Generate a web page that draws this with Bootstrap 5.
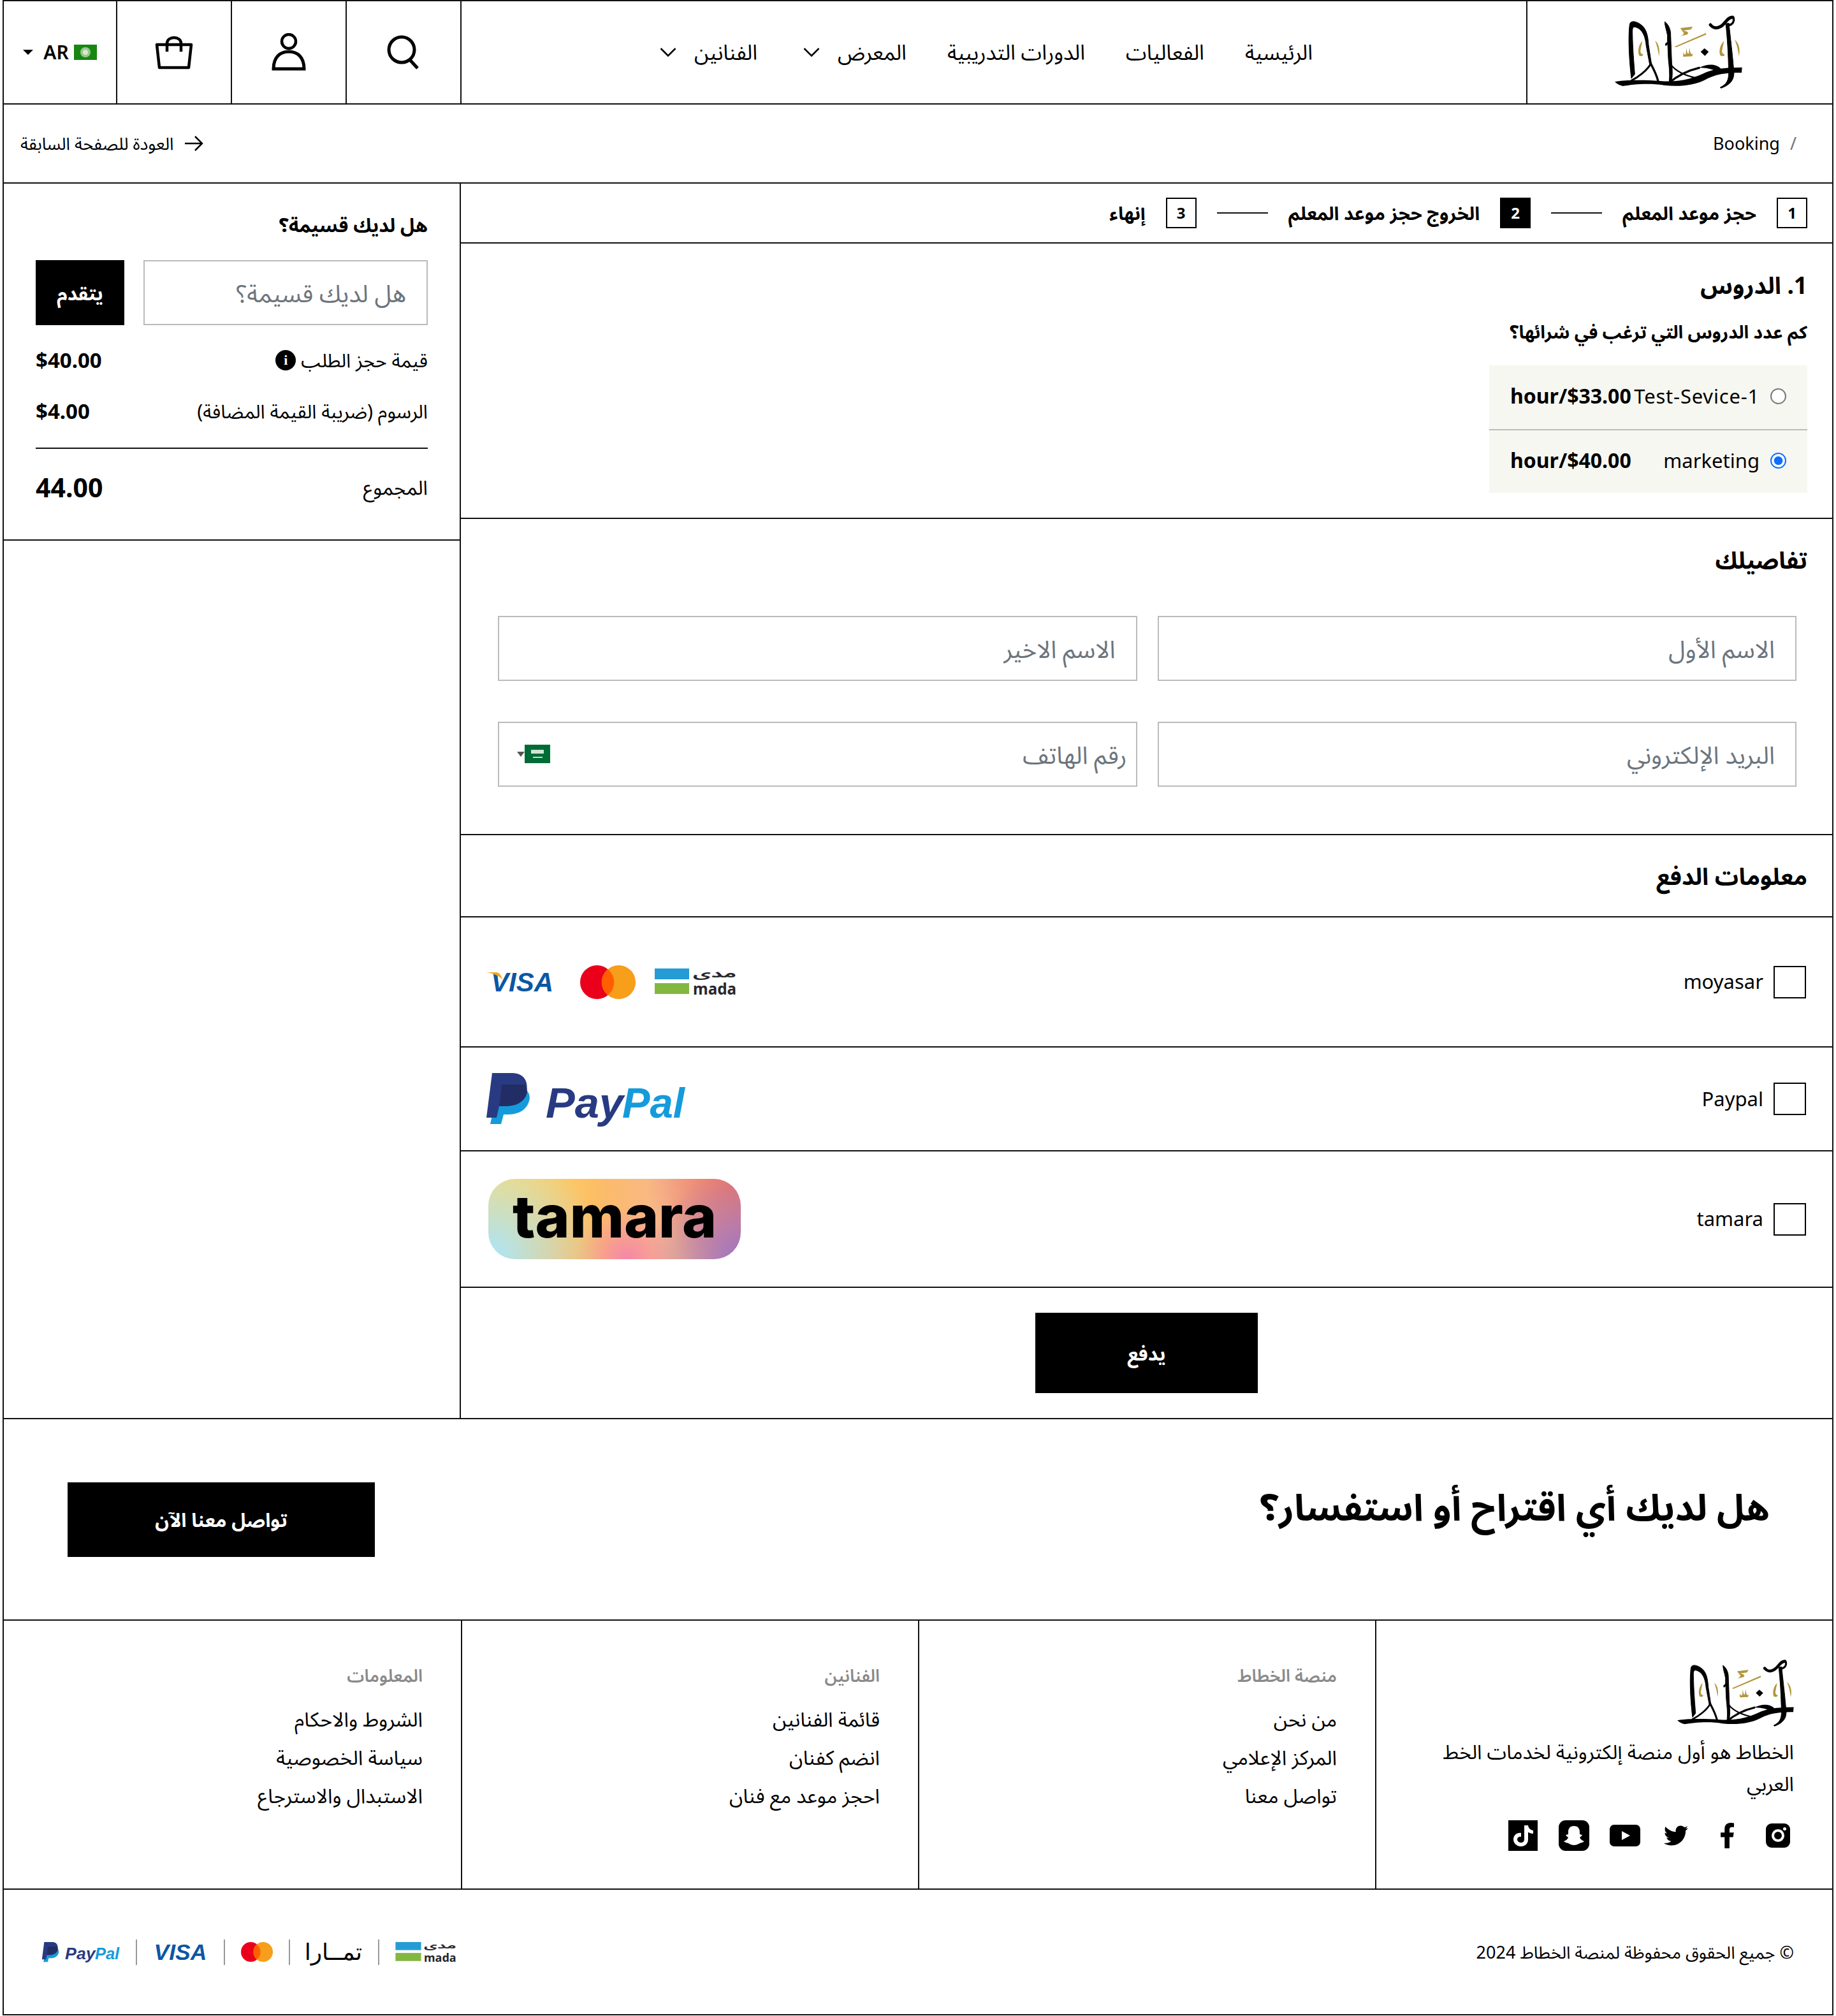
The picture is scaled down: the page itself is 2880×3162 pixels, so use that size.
<!DOCTYPE html>
<html lang="ar" dir="rtl">
<head>
<meta charset="utf-8">
<title>Booking</title>
<link rel="stylesheet" href="https://cdn.jsdelivr.net/npm/bootstrap@5.3.0/dist/css/bootstrap.min.css">
<style>
:root{--ink:#111;--field:#bbb}
html,body{background:#fff}
body{font-family:"Noto Sans","Noto Sans Arabic","DejaVu Sans",sans-serif;color:#000;font-size:30px;line-height:1.4}
a{color:#000;text-decoration:none}
.frame{margin-left:4px;margin-right:4px;border:2px solid var(--ink)}
.logo-art{overflow:visible}
.top-bar{height:162px;border-bottom:2px solid var(--ink)}
.logo-cell{width:480px;border-left:2px solid var(--ink)}
.logo-hd{width:200px;height:116px;margin-top:-2px;margin-right:4px}
.menu-area{font-size:33px;gap:64px;padding-right:24px}
.menu-item{gap:28px}
.menu-item + .menu-item{margin-right:8px}
.tool-cell{width:180px;border-right:2px solid var(--ink)}
.lang-cell{width:178px;border-right:2px solid var(--ink);gap:8px;font-size:30px;font-weight:600}
.mini-caret{width:0;height:0;border-left:8px solid transparent;border-right:8px solid transparent;border-top:8px solid #000;margin-right:8px}
.crumb-bar{height:124px;border-bottom:2px solid var(--ink);padding:0 56px 0 26px;font-size:27px}
.crumb-sep{color:#6c757d}
.side-col{border-right:2px solid var(--ink)}
.side-box{height:560px;border-bottom:2px solid var(--ink);padding:0 50px}
.side-title{font-size:30px;font-weight:700;height:120px;padding-top:44px}
.coupon{gap:30px}
.ctl{height:102px;border:2px solid var(--field);border-radius:0;font-size:38px;padding:0 32px;background:#fff}
.ctl::placeholder{color:#6c757d}
.coupon .ctl{width:446px;flex:none}
.btn-dark-box{background:#000;color:#fff;border:0;border-radius:0;font-weight:700}
.coupon .btn-dark-box{width:140px;height:102px;font-size:30px;padding:0}
.sum-line{font-size:30px;height:80px}
.sum-line b{font-weight:700;font-size:33px}
.sum-first{margin-top:15px}
.sum-total{margin-top:17px;border-top:2px solid var(--ink);padding-top:32px;font-size:31px}
.sum-total b{font-size:41px;font-weight:700}
.info-dot{width:32px;height:32px;border-radius:50%;background:#000;color:#fff;font:700 22px/32px "Liberation Serif",serif;text-align:center;flex:none}
.steps{height:94px;border-bottom:2px solid var(--ink);padding:0 39px;gap:32px;font-size:29px;font-weight:700}
.step-num{width:48px;height:48px;border:2px solid #000;font-size:24px;line-height:44px;text-align:center;flex:none}
.step-on{background:#000;color:#fff}
.step-rule{width:80px;height:2px;background:#111;flex:none}
.sec{border-bottom:2px solid var(--ink)}
.sec-lessons{height:432px;padding:43px 39px 0}
.sec-title{font-size:37px;font-weight:700;line-height:44px;margin:0}
.sec-q{font-size:28px;font-weight:700;line-height:44px;margin:29px 0 31px}
.lesson-box{width:499px;background:#f7f7f1}
.lesson-row{height:100px;padding:0 33px 3px;font-size:31px}
.lesson-row + .lesson-row{border-top:2px solid var(--field)}
.lesson-row b{margin-right:auto;font-weight:700;font-size:32px;white-space:nowrap}
.svc-wide{letter-spacing:.8px;white-space:nowrap}
.lesson-box .form-check-input{width:25px;height:25px;margin:0 0 0 17px;flex:none;border:2px solid #777}
.lesson-box .form-check-input:checked{border-color:#0d6efd;background-color:#fff;background-image:url("data:image/svg+xml,%3csvg xmlns='http://www.w3.org/2000/svg' viewBox='-4 -4 8 8'%3e%3ccircle r='2.6' fill='%230d6efd'/%3e%3c/svg%3e")}
.sec-details{height:496px;padding:0 56px 0 58px}
.sec-details .sec-title{padding:42px 0 0;margin-right:-17px;margin-bottom:65px;height:87px}
.fields{--bs-gutter-x:32px;--bs-gutter-y:64px}
.phone-wrap .ctl{padding-right:14px}
.phone-flag{position:absolute;left:30px;top:36px;display:flex;align-items:center}
.phone-caret{width:0;height:0;border-left:6px solid transparent;border-right:6px solid transparent;border-top:8px solid #555}
.sec-pay-head{height:129px;padding:0 39px}
.pay-row{padding:0 41px 0 40px;font-size:31px}
.pay-label{gap:16px}
.pay-label .form-check-input{width:51px;height:51px;margin:0;border:2px solid #000;border-radius:0;flex:none}
.h-moy{height:204px}.h-pp{height:163px}.h-tam{height:214px}
.moy-logos{gap:30px}
.mc-gap{margin-left:12px}
.tam-badge{width:396px;height:126px;margin-left:3px;border-radius:42px;font:800 92px/118px Inter,"Noto Sans",sans-serif;text-align:center;color:#000;direction:ltr;
background:
 radial-gradient(circle at 100% 100%,#9c74c4 0,rgba(156,116,196,0) 34%),
 radial-gradient(circle at 100% 0,#e9736a 0,rgba(233,115,106,0) 36%),
 radial-gradient(circle at 0 100%,#a9e6ff 0,rgba(169,230,255,0) 44%),
 radial-gradient(circle at 55% 100%,#f587a8 0,rgba(245,135,168,0) 32%),
 radial-gradient(circle at 0 0,#fddc70 0,rgba(253,220,112,0) 45%),
 linear-gradient(90deg,#fdc860,#fdbb62 40%,#f7b98c 70%,#f09a80)}
.pay-submit{height:204px;padding-top:39px}
.pay-submit .btn-dark-box{width:349px;height:126px;font-size:30px}
.contact{height:318px;border-top:2px solid var(--ink);border-bottom:2px solid var(--ink);padding:0 98px 0 100px}
.contact h2{font-size:58px;font-weight:700;margin:-40px 0 0;line-height:1.3}
.contact .btn-dark-box{width:482px;height:117px;font-size:30px;padding:0}
.foot-col{height:420px;border-left:2px solid var(--ink);padding:64px 60px 0}
.foot-col.endcol{border-left:0}
.foot-col h6{color:#8a8a8a;font-size:27px;font-weight:600;line-height:44px;margin:0 0 16px}
.foot-col a{display:block;font-size:31.500px;line-height:60px}
.foot-col.brand-col{padding:60px 60px 0 90px}
.logo-ft{width:183px;height:106px;display:block;margin-bottom:14px}
.brand-col p{font-size:31px;line-height:50px;margin:0 0 32px}
.socials{margin-right:-15px}
.socials span{width:80px;display:flex;justify-content:center;align-items:center;height:50px}
.base-bar{height:197px;border-top:2px solid var(--ink);padding:0 60px 0 59px;font-size:27px}
.paylogos{gap:25px}
.paylogos i{width:2px;height:40px;background:#999;flex:none}
.tam-arabic{font:400 36px/40px "DejaVu Sans",sans-serif;width:88px;text-align:center;white-space:nowrap}
</style>
</head>
<body>
<svg width="0" height="0" class="position-absolute">
 <symbol id="khatt" viewBox="168 72 600 348">
  <g stroke="#000" stroke-width="3">
  <path d="M246 372C236 290 230 180 238 118C242 100 262 101 285 115C315 133 324 165 327 215L340 300L332 306L316 220C312 170 296 142 270 132C254 126 250 132 251 160C252 230 258 300 262 352Z"/>
  <path d="M403 105C420 118 432 140 431 170L436 300C440 340 440 370 432 395L424 388C428 350 424 320 420 280L417 210L408 218L406 210L416 200L416 170C412 145 403 125 403 105Z"/>
  <path d="M690 115L705 112C712 180 722 260 728 335C732 375 716 400 668 418L664 414C695 400 705 380 704 340C702 260 698 180 690 115Z"/>
  </g>
  <g fill="none" stroke="#000" stroke-linecap="round">
   <path stroke-width="9" d="M338 302C320 335 278 366 246 382"/>
   <path stroke-width="10" d="M336 300C352 330 366 360 372 385"/>
   <path stroke-width="15" d="M722 84C696 84 690 115 665 128C645 140 628 132 618 120"/>
   <path stroke-width="10" d="M726 85C732 105 722 120 700 122"/>
   <path stroke-width="7" d="M430 305C455 340 500 360 560 372"/>
   <path stroke-width="10" d="M565 322C510 335 460 360 420 396"/>
  </g>
  <path d="M168 388C205 380 300 378 380 384C470 392 540 372 600 342C650 322 700 322 767 320L765 345C690 345 640 352 590 380C540 405 470 412 400 404C330 392 250 400 205 408C190 404 175 396 168 388Z"/>
  <path d="M565 322C600 304 640 300 668 326L640 336C620 326 590 322 565 322Z"/>
  <path d="M590 230L610 247L592 266L572 247Z"/>
  <g fill="#b3963f">
   <path d="M476 135L535 128L526 142L490 147C510 150 518 155 510 165L476 174C490 168 498 158 488 152Z"/>
   <path d="M450 222L597 158L598 166L456 226Z"/>
   <path d="M489 240C489 254 494 262 502 258L505 228C508 254 512 258 516 254L520 226C522 256 528 262 536 256L532 268L490 270Z"/>
   <path d="M298 196C282 210 274 240 282 264C292 270 300 266 302 260C292 256 286 250 290 235Z"/>
   <path d="M358 196C372 204 382 230 376 268C372 240 366 214 358 196Z"/>
   <path d="M682 196C666 210 656 240 664 264C674 270 684 266 686 260C676 256 670 250 674 235Z"/>
   <path d="M732 190C752 205 760 236 752 268C748 236 742 212 732 190Z"/>
  </g>
 </symbol>
 <symbol id="mc" viewBox="0 0 87 53" preserveAspectRatio="none">
  <circle cx="26.500" cy="26.500" r="26.500" fill="#eb001b"/>
  <circle cx="60.500" cy="26.500" r="26.500" fill="#f79e1b"/>
  <path d="M43.500 6.300C37.500 11 33.700 18.300 33.700 26.500S37.500 42 43.500 46.700C49.500 42 53.300 34.700 53.300 26.500S49.500 11 43.500 6.300Z" fill="#ff5f00"/>
 </symbol>
 <symbol id="pmark" viewBox="0 0 70 82">
  <path d="M19 22H48C66 22 70 36 67 44C62 60 48 65 33 65H27L23 80H6Z" fill="#159bdb"/>
  <path d="M9 0H41C59 0 66 14 63 28C58 47 44 52 28 52H20L16 70H0Z" fill="#283b82"/>
  <path d="M24 18H60C65 24 65 30 61 38C54 49 42 52 28 52H20Z" fill="#222d65"/>
 </symbol>
</svg>

<div class="frame">
 <header class="top-bar d-flex">
  <a href="#" class="logo-cell d-flex align-items-center justify-content-center"><svg class="logo-hd"><use href="#khatt"/></svg></a>
  <nav class="menu-area flex-grow-1 d-flex align-items-center justify-content-center">
   <a href="#">الرئيسية</a><a href="#">الفعاليات</a><a href="#">الدورات التدريبية</a>
   <a href="#" class="menu-item d-flex align-items-center"><span>المعرض</span><svg width="26" height="16" viewBox="0 0 26 16"><path d="M1.500 2L13 13.500L24.500 2" fill="none" stroke="#000" stroke-width="2.500"/></svg></a>
   <a href="#" class="menu-item d-flex align-items-center"><span>الفنانين</span><svg width="26" height="16" viewBox="0 0 26 16"><path d="M1.500 2L13 13.500L24.500 2" fill="none" stroke="#000" stroke-width="2.500"/></svg></a>
  </nav>
  <a href="#" class="tool-cell d-flex align-items-center justify-content-center"><svg width="52" height="54" viewBox="0 0 52 54"><circle cx="23" cy="23" r="20" fill="none" stroke="#000" stroke-width="5"/><path d="M36 39L48 52" stroke="#000" stroke-width="5"/></svg></a>
  <a href="#" class="tool-cell d-flex align-items-center justify-content-center"><svg width="54" height="60" viewBox="0 0 54 60"><circle cx="27" cy="13" r="11" fill="none" stroke="#000" stroke-width="4.500"/><path d="M3 56C3 38 13 29 27 29S51 38 51 56Z" fill="none" stroke="#000" stroke-width="5"/></svg></a>
  <a href="#" class="tool-cell d-flex align-items-center justify-content-center"><svg width="60" height="54" viewBox="0 0 60 54"><path d="M3 15H57L53 51H7Z" fill="none" stroke="#000" stroke-width="4.500" stroke-linejoin="round"/><path d="M19 26V13C19 1 41 1 41 13V26" fill="none" stroke="#000" stroke-width="4.500"/></svg></a>
  <a href="#" class="lang-cell d-flex align-items-center justify-content-center">
   <svg width="36" height="24" viewBox="0 0 36 24"><rect width="36" height="24" fill="#17870f"/><circle cx="18" cy="12" r="8" fill="#9cc592"/><circle cx="18" cy="12" r="4" fill="#d9e8d2"/></svg>
   <span dir="ltr">AR</span><span class="mini-caret"></span>
  </a>
 </header>

 <div class="crumb-bar d-flex align-items-center justify-content-between">
  <ol class="list-unstyled d-flex gap-3 m-0 p-0"><li class="crumb-sep">/</li><li dir="ltr">Booking</li></ol>
  <a href="#" class="d-flex align-items-center gap-3"><svg width="30" height="26" viewBox="0 0 30 26"><path d="M1 13H28M17 2L28 13L17 24" fill="none" stroke="#000" stroke-width="2.500"/></svg><span>العودة للصفحة السابقة</span></a>
 </div>

 <div class="row g-0">
  <main class="col-9">
   <div class="steps d-flex align-items-center">
    <span class="step-num">1</span><span>حجز موعد المعلم</span><span class="step-rule"></span>
    <span class="step-num step-on">2</span><span>الخروج حجز موعد المعلم</span><span class="step-rule"></span>
    <span class="step-num">3</span><span>إنهاء</span>
   </div>

   <section class="sec sec-lessons">
    <h2 class="sec-title">1. الدروس</h2>
    <p class="sec-q">كم عدد الدروس التي ترغب في شرائها؟</p>
    <div class="lesson-box">
     <label class="lesson-row d-flex align-items-center"><input class="form-check-input" type="radio" name="lesson"><span dir="ltr" class="svc-wide">Test-Sevice-1</span><b dir="ltr">hour/$33.00</b></label>
     <label class="lesson-row d-flex align-items-center"><input class="form-check-input" type="radio" name="lesson" checked><span dir="ltr">marketing</span><b dir="ltr">hour/$40.00</b></label>
    </div>
   </section>

   <section class="sec sec-details">
    <h2 class="sec-title">تفاصيلك</h2>
    <div class="row fields">
     <div class="col-6"><input class="form-control ctl" placeholder="الاسم الأول"></div>
     <div class="col-6"><input class="form-control ctl" placeholder="الاسم الاخير"></div>
     <div class="col-6"><input class="form-control ctl" placeholder="البريد الإلكتروني"></div>
     <div class="col-6"><div class="phone-wrap position-relative"><input class="form-control ctl" placeholder="رقم الهاتف">
      <span class="phone-flag" dir="ltr"><span class="phone-caret"></span><svg width="40" height="29" viewBox="0 0 40 29"><rect width="40" height="29" fill="#006c35"/><rect x="10" y="8" width="20" height="6" fill="#cfe4d6"/><rect x="13" y="19" width="15" height="1.500" fill="#fff"/></svg></span></div></div>
    </div>
   </section>

   <section class="sec sec-pay-head d-flex align-items-center"><h2 class="sec-title">معلومات الدفع</h2></section>

   <div class="sec pay-row h-moy d-flex align-items-center justify-content-between">
    <label class="pay-label d-flex align-items-center"><input class="form-check-input" type="checkbox"><span dir="ltr">moyasar</span></label>
    <div class="moy-logos d-flex align-items-center" dir="ltr">
     <svg class="logo-art" width="105" height="34" viewBox="0 0 105 34"><text x="7" y="32" font-family="Liberation Sans" font-weight="700" font-style="italic" font-size="43" fill="#0b57a4" textLength="98" lengthAdjust="spacingAndGlyphs" direction="ltr">VISA</text><path d="M0 2H15C20 2 23 6 25 13C20 8 12 4 0 2Z" fill="#f5a51e"/></svg>
     <svg class="mc-gap" width="87" height="53"><use href="#mc" width="87" height="53"/></svg>
     <svg class="logo-art" width="128" height="43" viewBox="0 0 128 43"><rect width="54" height="17" fill="#259bd6"/><rect y="23" width="54" height="17" fill="#84b740"/><text x="128" y="14" text-anchor="start" direction="rtl" font-family="Noto Sans Arabic,Noto Sans,DejaVu Sans" font-weight="700" font-size="17" fill="#27272b" textLength="68" lengthAdjust="spacingAndGlyphs">مدى</text><text x="60" y="41" font-family="Noto Sans" font-weight="700" font-size="25" fill="#27272b" direction="ltr" textLength="68" lengthAdjust="spacingAndGlyphs">mada</text></svg>
    </div>
   </div>
   <div class="sec pay-row h-pp d-flex align-items-center justify-content-between">
    <label class="pay-label d-flex align-items-center"><input class="form-check-input" type="checkbox"><span dir="ltr">Paypal</span></label>
    <svg class="logo-art" width="311" height="82" viewBox="0 0 311 82"><use href="#pmark" width="70" height="82"/><text x="93" y="70" direction="ltr" font-family="Liberation Sans" font-weight="700" font-style="italic" font-size="66" fill="#283b82" textLength="122" lengthAdjust="spacingAndGlyphs">Pay</text><text x="213" y="70" direction="ltr" font-family="Liberation Sans" font-weight="700" font-style="italic" font-size="66" fill="#159bdb" textLength="98" lengthAdjust="spacingAndGlyphs">Pal</text></svg>
   </div>
   <div class="sec pay-row h-tam d-flex align-items-center justify-content-between">
    <label class="pay-label d-flex align-items-center"><input class="form-check-input" type="checkbox"><span dir="ltr">tamara</span></label>
    <div class="tam-badge">tamara</div>
   </div>
   <div class="pay-submit text-center"><button class="btn btn-dark-box" type="button">يدفع</button></div>
  </main>

  <aside class="col-3 side-col">
   <div class="side-box">
    <div class="side-title">هل لديك قسيمة؟</div>
    <div class="coupon d-flex"><input class="form-control ctl" placeholder="هل لديك قسيمة؟"><button class="btn btn-dark-box" type="button">يتقدم</button></div>
    <div class="sum-line sum-first d-flex align-items-center justify-content-between"><span class="d-flex align-items-center gap-2">قيمة حجز الطلب<span class="info-dot">i</span></span><b dir="ltr">$40.00</b></div>
    <div class="sum-line d-flex align-items-center justify-content-between"><span>الرسوم (ضريبة القيمة المضافة)</span><b dir="ltr">$4.00</b></div>
    <div class="sum-total d-flex align-items-center justify-content-between"><span>المجموع</span><b dir="ltr">44.00</b></div>
   </div>
  </aside>
 </div>

 <section class="contact d-flex align-items-center justify-content-between">
  <h2>هل لديك أي اقتراح أو استفسار؟</h2>
  <a href="#" class="btn btn-dark-box d-flex align-items-center justify-content-center">تواصل معنا الآن</a>
 </section>

 <footer>
  <div class="row g-0">
   <div class="col-3 foot-col brand-col">
    <svg class="logo-ft"><use href="#khatt"/></svg>
    <p>الخطاط هو أول منصة إلكترونية لخدمات الخط العربي</p>
    <div class="socials d-flex">
     <span><svg width="38" height="38" viewBox="0 0 38 38"><rect width="38" height="38" rx="9"/><circle cx="19" cy="19" r="8" fill="none" stroke="#fff" stroke-width="4"/><circle cx="29.500" cy="8.500" r="2.500" fill="#fff"/></svg></span>
     <span><svg width="21" height="40" viewBox="22 0 275 512" preserveAspectRatio="none"><path d="M279.140 288l14.220-92.660h-88.910v-60.130c0-25.350 12.420-50.060 52.240-50.060h40.420V6.260S260.430 0 225.360 0c-73.220 0-121.080 44.380-121.080 124.720v70.620H22.890V288h81.390v224h100.170V288z"/></svg></span>
     <span><svg width="38" height="38" viewBox="0 0 512 512"><path d="M459.370 151.716c.325 4.548.325 9.097.325 13.645 0 138.720-105.583 298.558-298.558 298.558-59.452 0-114.680-17.219-161.137-47.106 8.447.974 16.568 1.299 25.340 1.299 49.055 0 94.213-16.568 130.274-44.832-46.132-.975-84.792-31.188-98.112-72.772 6.498.974 12.995 1.624 19.818 1.624 9.421 0 18.843-1.300 27.614-3.573-48.081-9.747-84.143-51.980-84.143-102.985v-1.299c13.969 7.797 30.214 12.670 47.431 13.319-28.264-18.843-46.781-51.005-46.781-87.391 0-19.492 5.197-37.360 14.294-52.954 51.655 63.675 129.300 105.258 216.365 109.807-1.624-7.797-2.599-15.918-2.599-24.040 0-57.828 46.782-104.934 104.934-104.934 30.213 0 57.502 12.670 76.670 33.137 23.715-4.548 46.456-13.320 66.599-25.340-7.798 24.366-24.366 44.833-46.132 57.827 21.117-2.273 41.584-8.122 60.426-16.243-14.292 20.791-32.161 39.308-52.628 54.253z"/></svg></span>
     <span><svg width="48" height="34" viewBox="0 0 48 34"><rect width="48" height="34" rx="7"/><path d="M19 10L32 17L19 24Z" fill="#fff"/></svg></span>
     <span><svg width="48" height="48" viewBox="0 0 48 48"><rect width="48" height="48" rx="11"/><path d="M24 9C17 9 15 14 15 18V22L11 23C12 25 14 26 15 27C14 30 11 32 8 33C10 35 13 35 15 36C18 38 21 39 24 39S30 38 33 36C35 35 38 35 40 33C37 32 34 30 33 27C34 26 36 25 37 23L33 22V18C33 14 31 9 24 9Z" fill="#fff"/></svg></span>
     <span><svg width="46" height="48" viewBox="0 0 46 48"><rect width="46" height="48"/><path d="M25 8H31C31.500 12 34 15 39 16V21C35.500 21 33 20 31 18.500V30C31 37 26 41 20 41C13 41 8 36 8 30C8 23 14 19 20 20V26C17 25 14 27 14 30C14 33 17 35 20 35C23 35 25 33 25 30Z" fill="#fff"/></svg></span>
    </div>
   </div>
   <div class="col-3 foot-col">
    <h6>منصة الخطاط</h6><a href="#">من نحن</a><a href="#">المركز الإعلامي</a><a href="#">تواصل معنا</a>
   </div>
   <div class="col-3 foot-col">
    <h6>الفنانين</h6><a href="#">قائمة الفنانين</a><a href="#">انضم كفنان</a><a href="#">احجز موعد مع فنان</a>
   </div>
   <div class="col-3 foot-col endcol">
    <h6>المعلومات</h6><a href="#">الشروط والاحكام</a><a href="#">سياسة الخصوصية</a><a href="#">الاستبدال والاسترجاع</a>
   </div>
  </div>
  <div class="base-bar d-flex align-items-center justify-content-between">
   <span>© جميع الحقوق محفوظة لمنصة الخطاط 2024</span>
   <div class="paylogos d-flex align-items-center">
    <svg class="logo-art" width="96" height="32" viewBox="0 0 128 43"><rect width="54" height="17" fill="#259bd6"/><rect y="23" width="54" height="17" fill="#84b740"/><text x="128" y="14" text-anchor="start" direction="rtl" font-family="Noto Sans Arabic,Noto Sans,DejaVu Sans" font-weight="700" font-size="17" fill="#27272b" textLength="68" lengthAdjust="spacingAndGlyphs">مدى</text><text x="60" y="41" font-family="Noto Sans" font-weight="700" font-size="25" fill="#27272b" direction="ltr" textLength="68" lengthAdjust="spacingAndGlyphs">mada</text></svg><i></i>
    <span class="tam-arabic">تمــارا</span><i></i>
    <svg width="50" height="31"><use href="#mc" width="50" height="31"/></svg><i></i>
    <svg class="logo-art" width="86" height="28" viewBox="0 0 105 34"><text x="2" y="32" font-family="Liberation Sans" font-weight="700" font-style="italic" font-size="43" fill="#0b57a4" textLength="101" lengthAdjust="spacingAndGlyphs" direction="ltr">VISA</text></svg><i></i>
    <svg class="logo-art" width="123" height="32" viewBox="0 0 311 82"><use href="#pmark" width="70" height="82"/><text x="93" y="70" direction="ltr" font-family="Liberation Sans" font-weight="700" font-style="italic" font-size="66" fill="#283b82" textLength="122" lengthAdjust="spacingAndGlyphs">Pay</text><text x="213" y="70" direction="ltr" font-family="Liberation Sans" font-weight="700" font-style="italic" font-size="66" fill="#159bdb" textLength="98" lengthAdjust="spacingAndGlyphs">Pal</text></svg>
   </div>
  </div>
 </footer>
</div>
<script src="https://cdn.jsdelivr.net/npm/bootstrap@5.3.0/dist/js/bootstrap.bundle.min.js"></script>
</body>
</html>
